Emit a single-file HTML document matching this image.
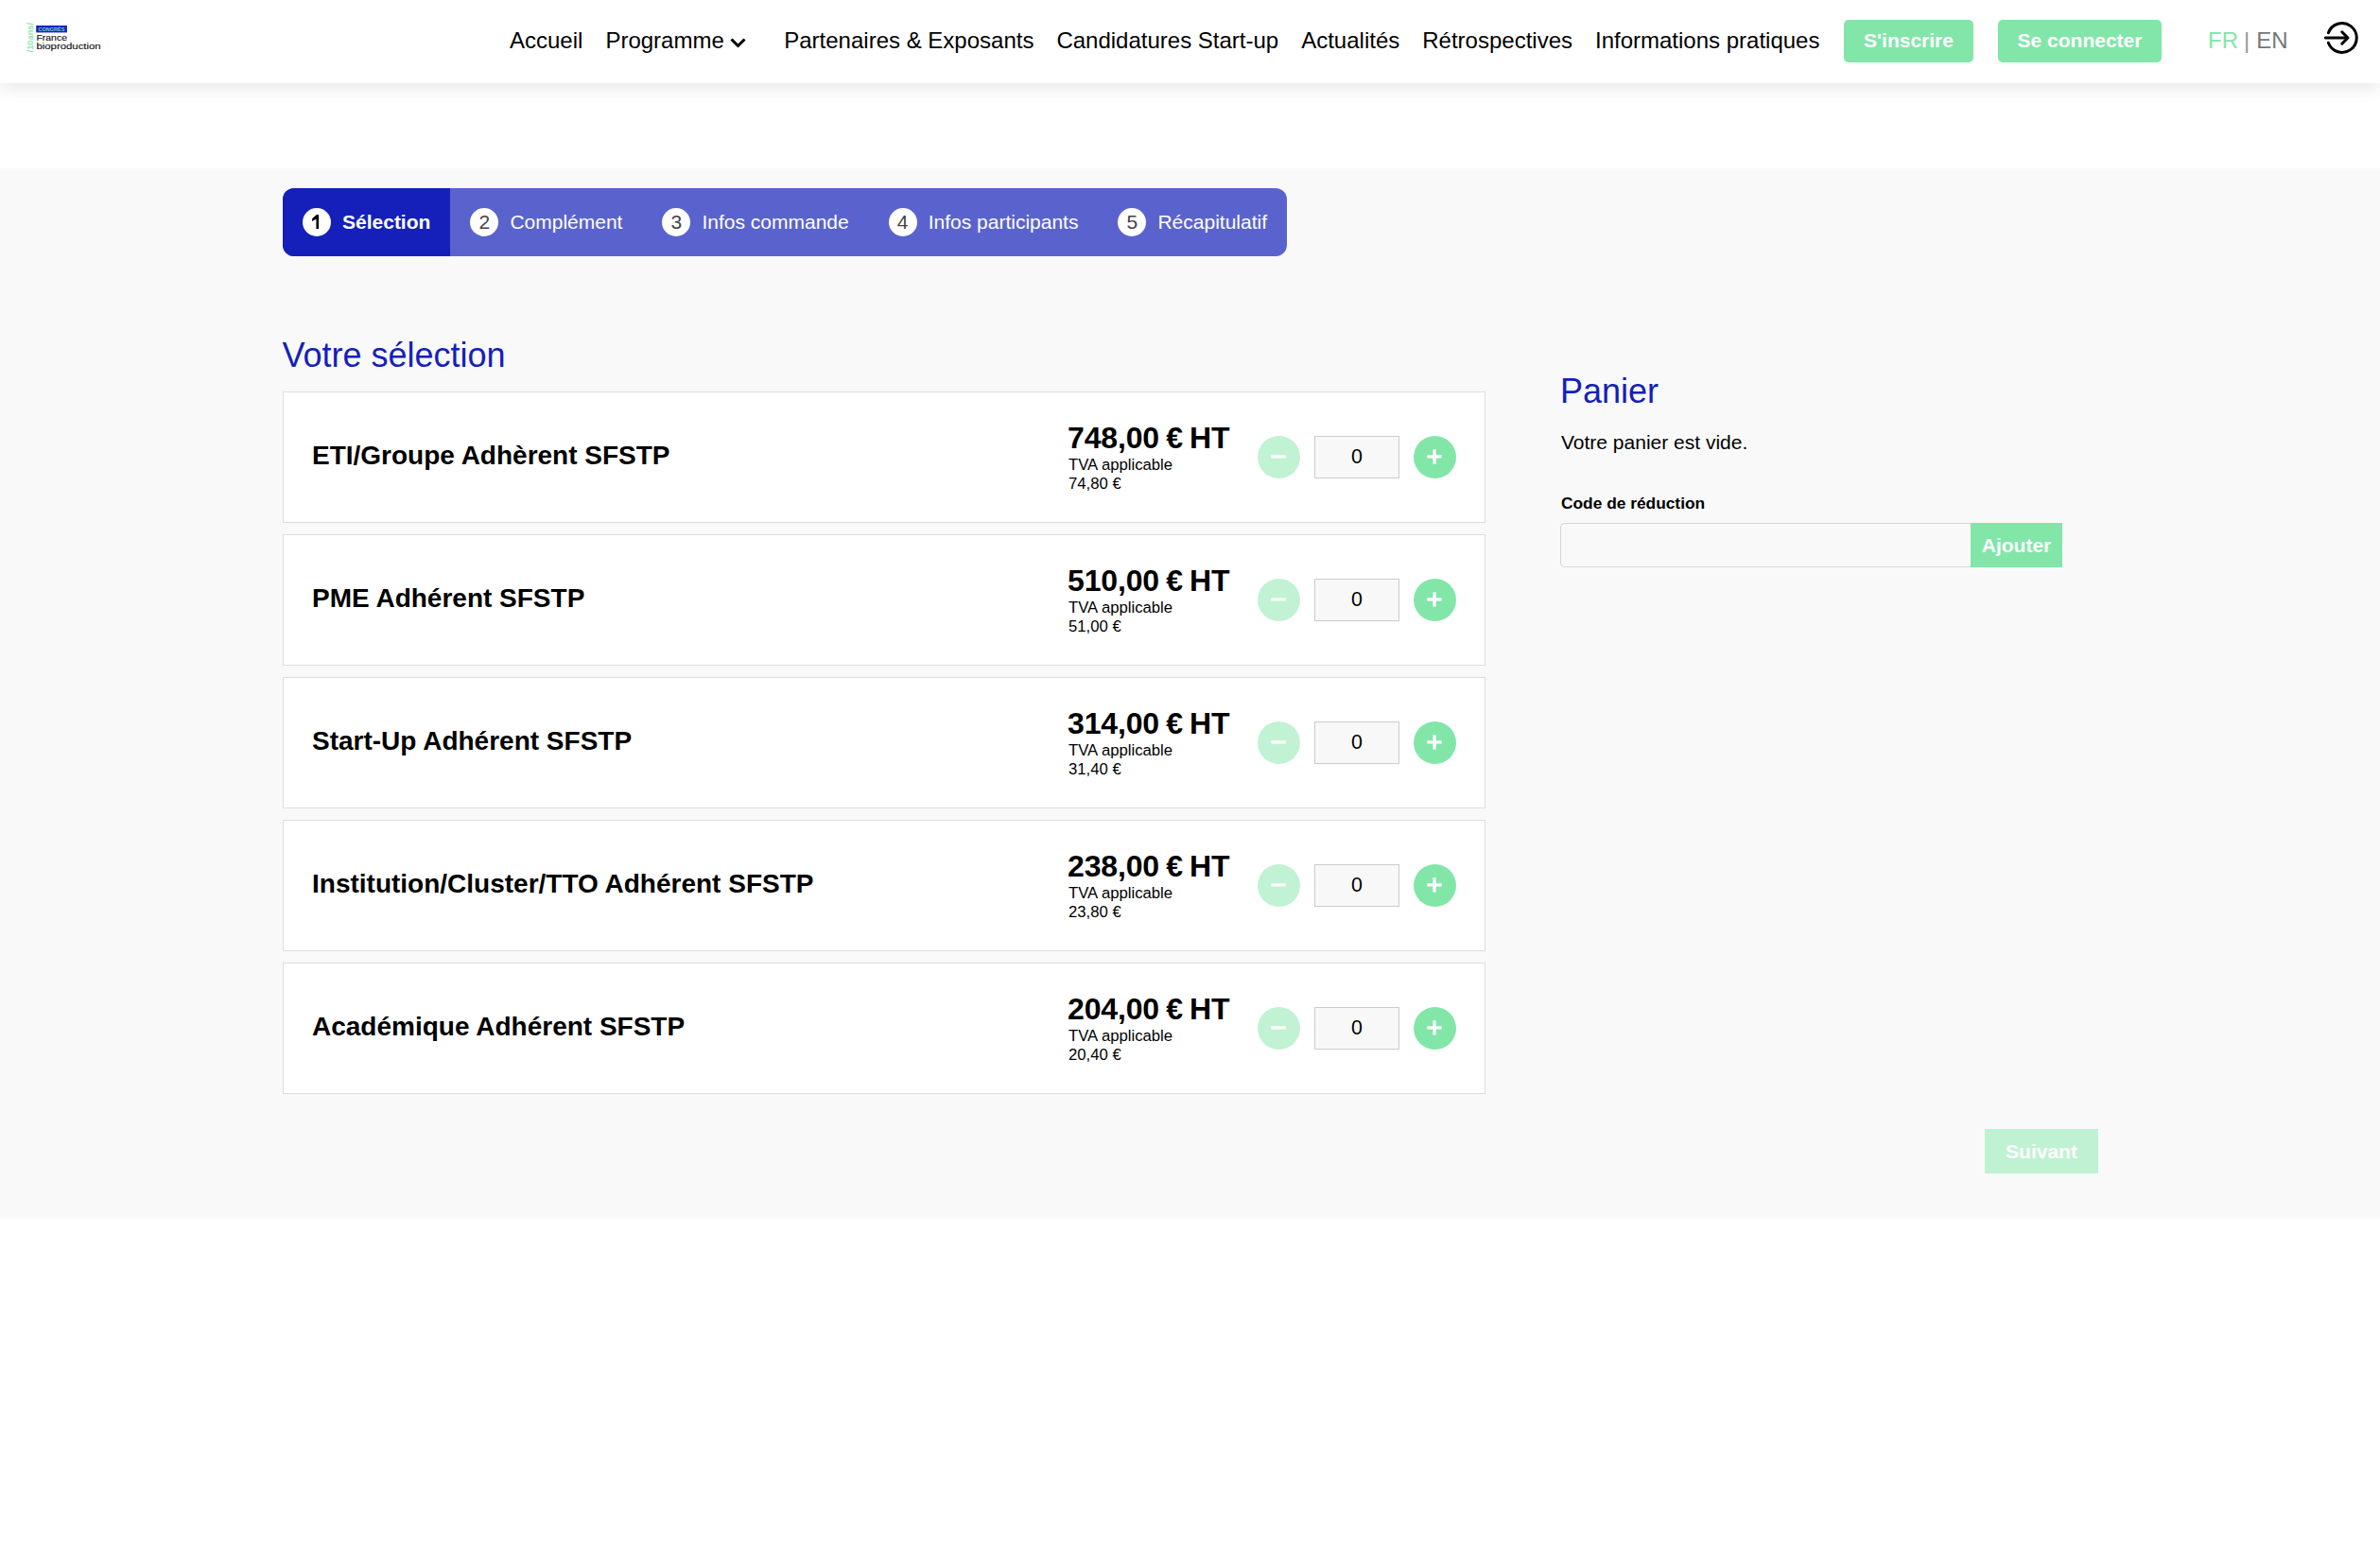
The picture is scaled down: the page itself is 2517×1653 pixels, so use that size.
<!DOCTYPE html>
<html lang="fr">
<head>
<meta charset="utf-8">
<title>Billetterie</title>
<style>
*{box-sizing:border-box;margin:0;padding:0}
html,body{width:2517px;height:1653px;overflow:hidden;background:#fff;font-family:"Liberation Sans",sans-serif;color:#000}
#hdr{position:absolute;left:0;top:0;width:2517px;height:88px;background:#fff;box-shadow:0 4px 18px rgba(0,0,0,.1);z-index:2}
.logo{position:absolute;left:0;top:0;width:120px;height:88px}
.nav{position:absolute;top:0;height:88px;font-size:24px;line-height:86px;white-space:nowrap;display:flex}
.nav span{margin-right:24px}
.btn{position:absolute;top:21px;height:45px;background:#82e6a8;border-radius:5px;color:#fff;font-weight:bold;font-size:21px;line-height:43px;text-align:center}
#gray{position:absolute;left:0;top:178px;width:2517px;height:1111px;background:#f9f9f9}
#steps{position:absolute;left:299px;top:199px;height:72px;display:flex;border-radius:12px;overflow:hidden;background:#5a63cd}
.st{display:flex;align-items:center;padding:0 21px;height:72px;color:#fff;font-size:21px;white-space:nowrap}
.st .c{width:30px;height:30px;border-radius:50%;background:#fff;color:#444;display:flex;align-items:center;justify-content:center;margin-right:12px;font-size:21px;font-weight:normal}
.st.on{background:#1420b9;font-weight:bold}
.st.on .c{color:#000;font-weight:bold}
h2{position:absolute;font-weight:normal;color:#1420b9;font-size:36px;line-height:40px;white-space:nowrap}
.card{position:absolute;left:299px;width:1272px;height:139px;background:#fff;border:1px solid #ddd}
.card .nm{position:absolute;left:30px;top:0;height:137px;line-height:134px;font-size:28px;font-weight:bold;white-space:nowrap}
.card .pr{position:absolute;left:830px;top:30px;white-space:nowrap}
.pr .p{margin-left:-1px;word-spacing:-1.5px;letter-spacing:-.15px;font-size:32px;font-weight:bold;line-height:36px}
.pr .t{font-size:16.7px;line-height:20px}
.pr .p+.t{margin-top:1px}
.qm,.qp{position:absolute;top:46px;width:45px;height:45px;border-radius:50%;background:#82e6a8}
.qm{left:1030px;background:#c0f2d3}
.qp{left:1195px}
.qm svg,.qp svg{position:absolute;left:0;top:0}
.qi{position:absolute;left:1090px;top:46px;width:90px;height:45px;border:1px solid #ccc;background:#f8f8f8;font-size:21.33px;line-height:42.6px;text-align:center}
.panier-txt{position:absolute;left:1651px;top:454px;font-size:21px;line-height:28px;white-space:nowrap}
.lbl{position:absolute;left:1651px;top:521px;font-size:17.33px;font-weight:bold;line-height:22px;white-space:nowrap}
.inp{position:absolute;left:1650px;top:553px;width:440px;height:47px;border:1px solid #d5d5d5;border-right:0;border-radius:5px 0 0 5px;background:#f9f9f9}
.ajt{position:absolute;left:2084px;top:553px;width:97px;height:47px;background:#82e6a8;color:#fff;font-weight:bold;font-size:21px;line-height:47px;text-align:center}
.suiv{position:absolute;left:2099px;top:1194px;width:120px;height:47px;background:#bff2d3;color:#fff;font-weight:bold;font-size:21px;line-height:47px;text-align:center}
</style>
</head>
<body>
<div id="hdr">
  <svg class="logo" width="120" height="88" viewBox="0 0 120 88">
    <text x="0" y="0" transform="translate(34.6,55.4) rotate(-90)" font-family="Liberation Sans" font-size="8.6" font-weight="bold" textLength="31.5" lengthAdjust="spacingAndGlyphs" fill="#8fe8b2">/10ans/</text>
    <rect x="38.2" y="27" width="32.7" height="7.4" fill="#1422c0"/>
    <text x="40.5" y="33" font-family="Liberation Sans" font-size="5.4" font-weight="bold" textLength="28" lengthAdjust="spacingAndGlyphs" fill="#6fd3bd">CONGRÈS</text>
    <text x="38.4" y="42.7" font-family="Liberation Sans" font-size="9" stroke="#111" stroke-width=".12" textLength="32.6" lengthAdjust="spacingAndGlyphs" fill="#111">France</text>
    <text x="38.4" y="51.6" font-family="Liberation Sans" font-size="9" stroke="#111" stroke-width=".12" textLength="68.3" lengthAdjust="spacingAndGlyphs" fill="#111">bioproduction</text>
  </svg>
  <div class="nav" style="left:539px">
    <span>Accueil</span><span style="margin-right:0">Programme</span>
    <svg width="17" height="11" viewBox="0 0 17 11" style="margin:40px 40px 0 6.5px"><polyline points="1.5,1.5 8.5,8.5 15.5,1.5" fill="none" stroke="#000" stroke-width="3"/></svg>
    <span>Partenaires &amp; Exposants</span><span>Candidatures Start-up</span><span>Actualités</span><span>Rétrospectives</span><span style="margin-right:0">Informations pratiques</span>
  </div>
  <div class="btn" style="left:1950px;width:137px">S'inscrire</div>
  <div class="btn" style="left:2113px;width:173px">Se connecter</div>
  <div class="nav" style="left:2335px"><span style="color:#82e6a8;margin-right:6px">FR</span><span style="color:#999;margin-right:7px">|</span><span style="color:#777">EN</span></div>
  <svg style="position:absolute;left:2450px;top:16px" width="50" height="50" viewBox="0 0 50 50">
    <path d="M12.4 18.8 A15.4 15.4 0 1 1 12.4 29.2" fill="none" stroke="#000" stroke-width="3" stroke-linecap="round"/>
    <line x1="9.3" y1="24" x2="32" y2="24" stroke="#000" stroke-width="3" stroke-linecap="round"/>
    <polyline points="26.8,17.8 33,24 26.8,30.2" fill="none" stroke="#000" stroke-width="3" stroke-linecap="round" stroke-linejoin="round"/>
  </svg>
</div>
<div id="gray"></div>
<div id="steps">
  <div class="st on"><span class="c"><svg width="30" height="30" viewBox="0 0 30 30"><polygon points="14.9,7 17.1,7 17.1,22 14.4,22 14.4,11.7 10.1,14 10.1,11.2" fill="#000"/></svg></span>Sélection</div>
  <div class="st"><span class="c">2</span>Complément</div>
  <div class="st"><span class="c">3</span>Infos commande</div>
  <div class="st"><span class="c">4</span>Infos participants</div>
  <div class="st"><span class="c">5</span>Récapitulatif</div>
</div>
<h2 style="left:298.5px;top:356.3px">Votre sélection</h2>
<div class="card" style="top:414px"><div class="nm">ETI/Groupe Adhèrent SFSTP</div><div class="pr"><div class="p">748,00 € HT</div><div class="t">TVA applicable</div><div class="t">74,80 €</div></div><div class="qm"><svg width="45" height="45"><line x1="14.3" y1="21.9" x2="29.7" y2="21.9" stroke="#fff" stroke-width="3.3"/></svg></div><div class="qi">0</div><div class="qp"><svg width="45" height="45"><line x1="14.3" y1="21.9" x2="29.7" y2="21.9" stroke="#fff" stroke-width="3.3"/><line x1="22" y1="14.2" x2="22" y2="29.6" stroke="#fff" stroke-width="3.3"/></svg></div></div>
<div class="card" style="top:565px"><div class="nm">PME Adhérent SFSTP</div><div class="pr"><div class="p">510,00 € HT</div><div class="t">TVA applicable</div><div class="t">51,00 €</div></div><div class="qm"><svg width="45" height="45"><line x1="14.3" y1="21.9" x2="29.7" y2="21.9" stroke="#fff" stroke-width="3.3"/></svg></div><div class="qi">0</div><div class="qp"><svg width="45" height="45"><line x1="14.3" y1="21.9" x2="29.7" y2="21.9" stroke="#fff" stroke-width="3.3"/><line x1="22" y1="14.2" x2="22" y2="29.6" stroke="#fff" stroke-width="3.3"/></svg></div></div>
<div class="card" style="top:716px"><div class="nm">Start-Up Adhérent SFSTP</div><div class="pr"><div class="p">314,00 € HT</div><div class="t">TVA applicable</div><div class="t">31,40 €</div></div><div class="qm"><svg width="45" height="45"><line x1="14.3" y1="21.9" x2="29.7" y2="21.9" stroke="#fff" stroke-width="3.3"/></svg></div><div class="qi">0</div><div class="qp"><svg width="45" height="45"><line x1="14.3" y1="21.9" x2="29.7" y2="21.9" stroke="#fff" stroke-width="3.3"/><line x1="22" y1="14.2" x2="22" y2="29.6" stroke="#fff" stroke-width="3.3"/></svg></div></div>
<div class="card" style="top:867px"><div class="nm">Institution/Cluster/TTO Adhérent SFSTP</div><div class="pr"><div class="p">238,00 € HT</div><div class="t">TVA applicable</div><div class="t">23,80 €</div></div><div class="qm"><svg width="45" height="45"><line x1="14.3" y1="21.9" x2="29.7" y2="21.9" stroke="#fff" stroke-width="3.3"/></svg></div><div class="qi">0</div><div class="qp"><svg width="45" height="45"><line x1="14.3" y1="21.9" x2="29.7" y2="21.9" stroke="#fff" stroke-width="3.3"/><line x1="22" y1="14.2" x2="22" y2="29.6" stroke="#fff" stroke-width="3.3"/></svg></div></div>
<div class="card" style="top:1018px"><div class="nm">Académique Adhérent SFSTP</div><div class="pr"><div class="p">204,00 € HT</div><div class="t">TVA applicable</div><div class="t">20,40 €</div></div><div class="qm"><svg width="45" height="45"><line x1="14.3" y1="21.9" x2="29.7" y2="21.9" stroke="#fff" stroke-width="3.3"/></svg></div><div class="qi">0</div><div class="qp"><svg width="45" height="45"><line x1="14.3" y1="21.9" x2="29.7" y2="21.9" stroke="#fff" stroke-width="3.3"/><line x1="22" y1="14.2" x2="22" y2="29.6" stroke="#fff" stroke-width="3.3"/></svg></div></div>
<h2 style="left:1650px;top:394px">Panier</h2>
<div class="panier-txt">Votre panier est vide.</div>
<div class="lbl">Code de réduction</div>
<div class="inp"></div>
<div class="ajt">Ajouter</div>
<div class="suiv">Suivant</div>
</body>
</html>
